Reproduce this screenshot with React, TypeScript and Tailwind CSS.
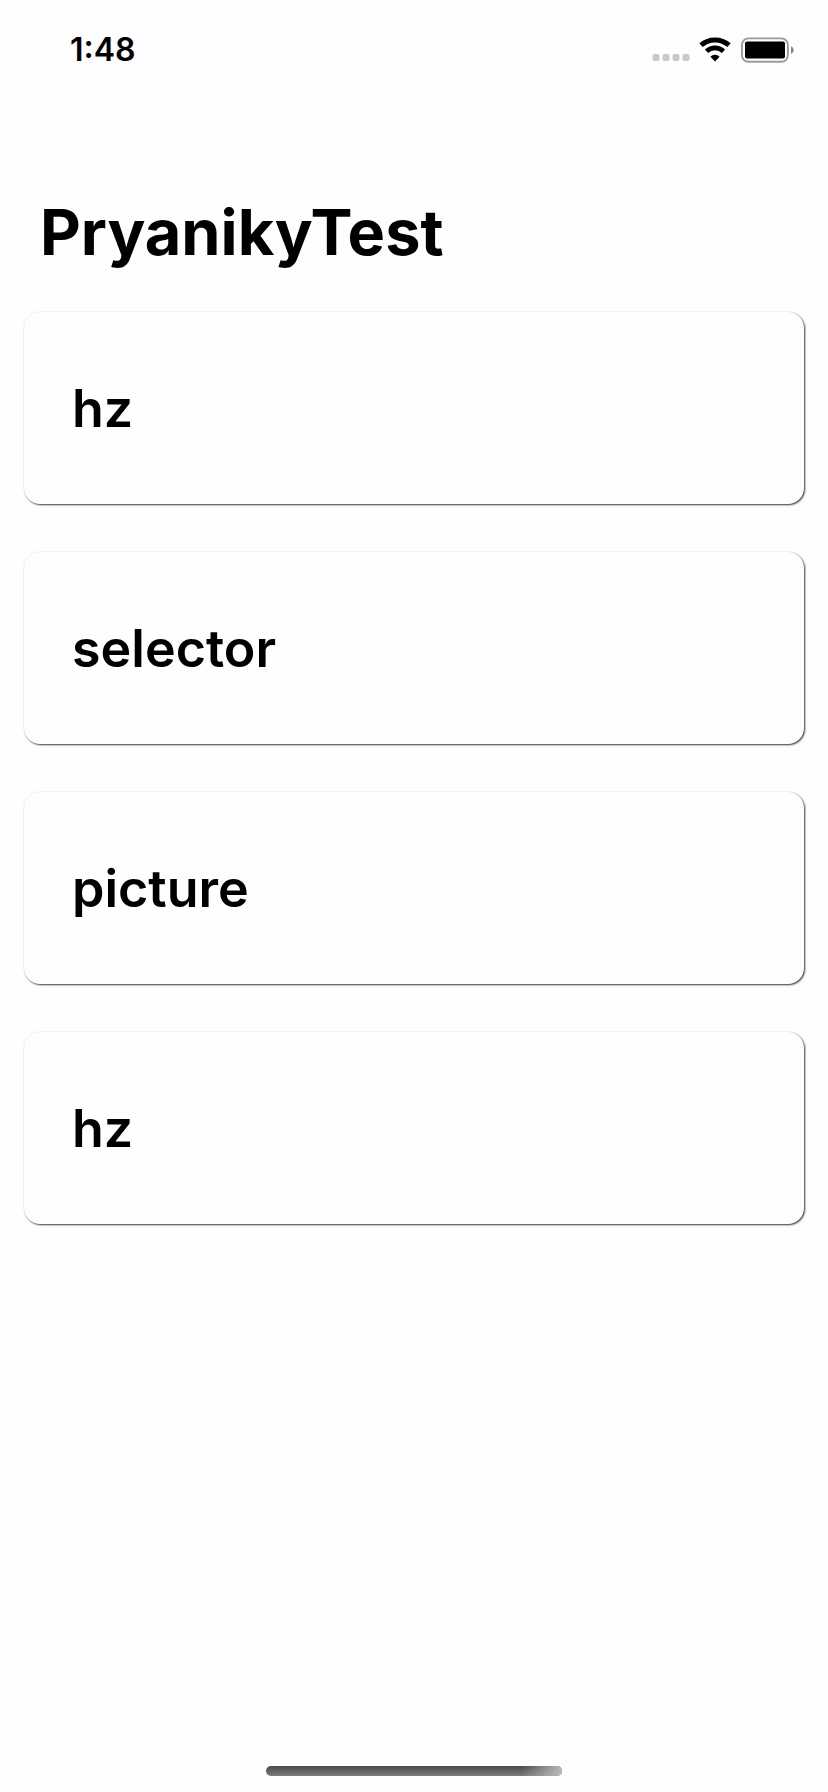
import React from "react";

const items = ["hz", "selector", "picture", "hz"];

function StatusBar() {
  return (
    <header className="flex h-24 items-center justify-between pt-1 pr-[34px] pl-[70px]">
      <time className="text-[32px] leading-9 font-semibold">1:48</time>
      <div className="flex items-center gap-[9px]">
        <svg className="h-[26px] w-[38px]" viewBox="0 0 38 26" aria-hidden="true">
          <g fill="#c9c9c9">
            <rect x="0.500" y="17" width="7" height="7" rx="2" />
            <rect x="10.500" y="17" width="7" height="7" rx="2" />
            <rect x="20.500" y="17" width="7" height="7" rx="2" />
            <rect x="30.500" y="17" width="7" height="7" rx="2" />
          </g>
        </svg>
        <svg className="h-[26px] w-8" viewBox="0 0 32 26" fill="none" aria-hidden="true">
          <path d="M2 8.200C9.900 1.100 22.100 1.100 30 8.200" stroke="#000" strokeWidth="5" />
          <path d="M7.500 14.200C12.400 9.800 19.600 9.800 24.500 14.200" stroke="#000" strokeWidth="4.800" />
          <path d="M16 24.400L11.400 19.800C14 16.900 18 16.900 20.600 19.800Z" fill="#000" />
        </svg>
        <svg className="h-[26px] w-[54px]" viewBox="0 0 54 26" aria-hidden="true">
          <rect x="1.900" y="1.400" width="46" height="23.400" rx="6.500" fill="none" stroke="#999" strokeWidth="1.900" />
          <rect x="5" y="4.600" width="40" height="17" rx="2" />
          <path d="M51 9.200c3.600 1.200 3.600 6.600 0 7.800z" fill="#888" />
        </svg>
      </div>
    </header>
  );
}

export default function App() {
  return (
    <div className="flex min-h-screen flex-col bg-[#fefefe] font-['Inter',sans-serif] text-black">
      <StatusBar />
      <main className="flex-1 px-6 pt-24">
        <h1 className="px-4 text-[63px] leading-[80px] font-bold">PryanikyTest</h1>
        <ul className="mt-10 flex flex-col gap-12">
          {items.map((item, i) => (
            <li key={i}>
              <button
                type="button"
                className="flex h-48 w-full items-center rounded-2xl bg-[#fefefe] px-12 pt-0.5 text-left text-[52px] leading-16 font-semibold shadow-[1px_1px_2px_rgba(0,0,0,0.78),0_0_1px_rgba(0,0,0,0.08)]"
              >
                {item}
              </button>
            </li>
          ))}
        </ul>
      </main>
      <footer className="flex justify-center pb-4">
        <div className="h-[10px] w-[296px] rounded-full bg-linear-to-b from-[#4a4a4a] to-[#7c7c7c]">
          <div className="ml-auto h-full w-10 rounded-r-full bg-linear-to-r from-[#bababa]/0 to-[#bababa]" />
        </div>
      </footer>
    </div>
  );
}
